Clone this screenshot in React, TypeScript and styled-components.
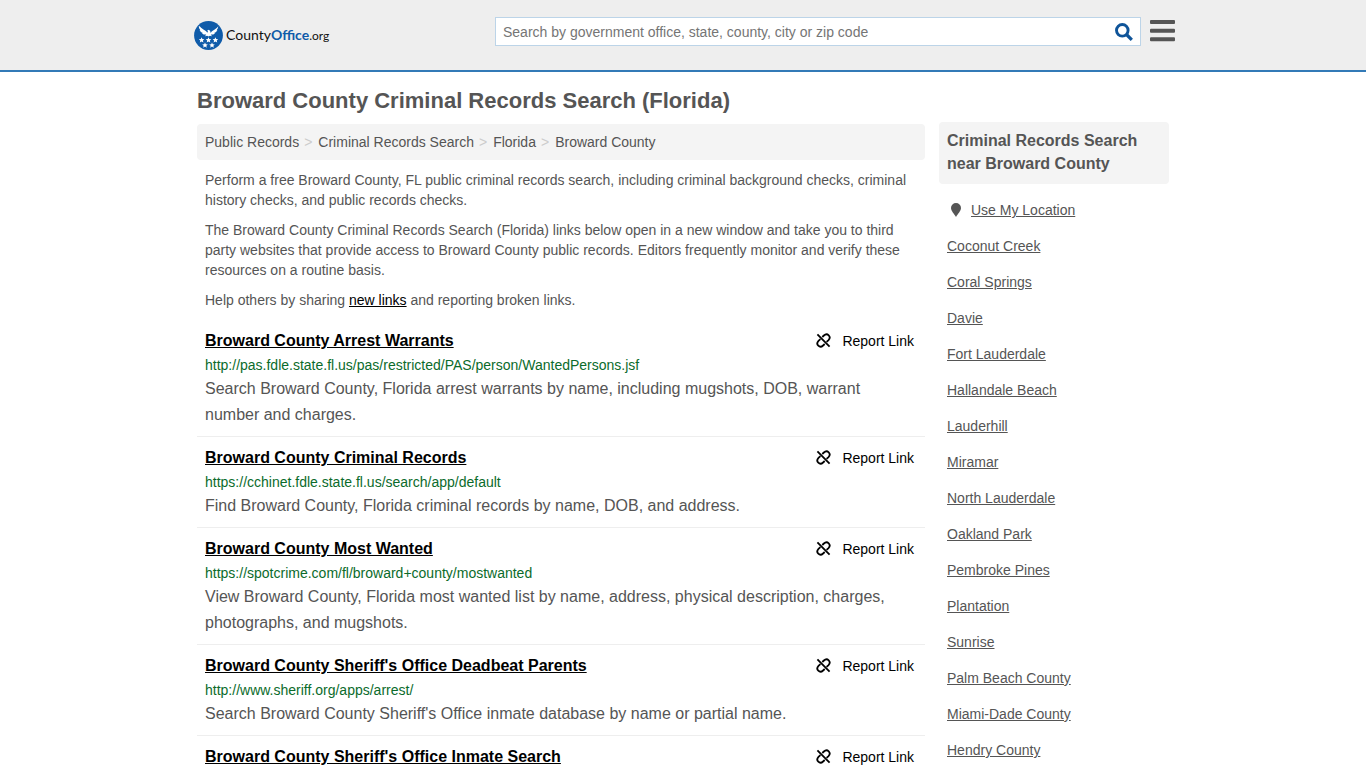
import React from 'react';
import styled, { createGlobalStyle } from 'styled-components';

const GlobalStyle = createGlobalStyle`
  *, *::before, *::after { box-sizing: border-box; }
  body {
    margin: 0;
    background: #fff;
    color: #555;
    font: 14px/20px "Liberation Sans", Arial, sans-serif;
  }
  a { color: inherit; }
`;

const Header = styled.header`
  height: 72px;
  background: #eee;
  border-bottom: 2px solid #337ab7;
`;

const HeaderInner = styled.div`
  display: flex;
  align-items: flex-start;
  max-width: 984px;
  margin: 0 auto;
  padding: 17px 0 0 3px;
`;

const Logo = styled.a`
  display: flex;
  align-items: center;
  gap: 3px;
  margin-top: 3px;
  color: #111;
  font: 14px/30px Lato, sans-serif;
  text-decoration: none;

  b { color: #0f5ba9; }
  small { font-size: 12px; }
`;

const SearchForm = styled.form`
  display: flex;
  flex: 0 1 646px;
  height: 29px;
  margin-left: auto;
  background: #fff;
  border: 1px solid #bcd4e8;
`;

const SearchInput = styled.input`
  flex: 1;
  min-width: 0;
  padding: 0 7px;
  border: 0;
  outline: 0;
  background: none;
  color: #555;
  font: 14px/20px "Liberation Sans", Arial, sans-serif;

  &::placeholder { color: #757575; }
`;

const IconButton = styled.button`
  display: flex;
  align-items: center;
  padding: 0 7px;
  border: 0;
  background: none;
  cursor: pointer;
`;

const MenuButton = styled(IconButton)`
  margin: 3px 0 0 9px;
  padding: 0;
`;

const Page = styled.div`
  display: flex;
  align-items: flex-start;
  gap: 14px;
  max-width: 972px;
  margin: 0 auto;
`;

const Main = styled.main`
  flex: 1;
  min-width: 0;
`;

const Title = styled.h1`
  margin: 0;
  padding: 15px 0 9px;
  font-size: 22px;
  line-height: 28px;
`;

const Breadcrumb = styled.nav`
  padding: 8px;
  background: #f4f4f4;
  border-radius: 4px;

  a { text-decoration: none; }
  a + a::before {
    content: ">";
    padding: 0 6px 0 5px;
    color: #ccc;
  }
`;

const Intro = styled.div`
  padding: 0 8px;

  p { margin: 10px 0; }
  a { color: #000; }
`;

const Record = styled.article`
  padding: 8px;
  border-bottom: 1px solid #eee;
`;

const RecordHead = styled.div`
  display: flex;
  justify-content: space-between;
  align-items: center;
  height: 25px;
  padding-right: 3px;
  color: #000;
`;

const RecordTitle = styled.h2`
  margin: 0;
  font-size: 16px;
  line-height: 25px;
`;

const ReportLink = styled.a`
  display: flex;
  align-items: center;
  gap: 11px;
  text-decoration: none;
`;

const RecordUrl = styled.div`
  padding: 2px 0 1px;
  color: #0b6b2b;
  line-height: 20px;
`;

const RecordText = styled.p`
  margin: 0;
  font-size: 16px;
  line-height: 26px;
`;

const Sidebar = styled.aside`
  flex: 0 0 230px;
  padding-top: 50px;
`;

const SidebarTitle = styled.h2`
  margin: 0 0 8px;
  padding: 7px 8px 9px;
  background: #f4f4f4;
  border-radius: 4px;
  font-size: 16px;
  line-height: 23px;
`;

const PlaceList = styled.ul`
  margin: 0;
  padding: 0 8px;
  list-style: none;
`;

const Place = styled.li`
  display: flex;
  align-items: center;
  gap: 10px;
  height: 36px;

  svg { margin-left: 4px; }
`;

const star = (x: number, y: number) =>
  `M${x} ${y - 2.8}l.8 1.900 2 .1-1.500 1.300.5 2-1.800-1.100-1.800 1.100.5-2-1.500-1.300 2-.1z`;

const LogoMark = () => (
  <svg width="29" height="29" viewBox="0 0 29 29" aria-hidden="true">
    <circle cx="14.5" cy="14.5" r="14.4" fill="#0f5ba9" />
    <path
      fill="#fff"
      d="M4.700 5.300c.2 1.600.8 2.900 1.700 3.900l-.8-.1c.7 1.500 1.800 2.500 3.200 3l-.8.3c1.300 1.100 2.700 1.300 4.200 1.200l-1.200 1.600 2.100-.5 1.400.9 1.400-.9 2.100.5-1.200-1.600c1.500.1 2.900-.1 4.200-1.200l-.8-.3c1.400-.5 2.500-1.500 3.200-3l-.8.1c.9-1 1.500-2.300 1.700-3.900-1.700 2.300-3.500 3.100-5.200 4.200-1.100.7-1.900 1.500-2.400 2.400l-.6-2.200-1.500-.9-1.700 1.200 1.100.1-.7 1.700c-.5-.9-1.200-1.600-2.200-2.300-1.700-1.100-3.600-1.900-5.400-4.200z"
    />
    <path
      fill="#fff"
      d={[star(7.600, 19), star(14.500, 19), star(21.400, 19), star(11, 24.200), star(18, 24.200)].join('')}
    />
  </svg>
);

const SearchIcon = () => (
  <svg width="18" height="18" viewBox="0 0 18 18" fill="none" stroke="#0f5499" aria-hidden="true">
    <circle cx="7.300" cy="7.300" r="5.800" strokeWidth="2.900" />
    <path d="M11.500 11.500l5.300 5.300" strokeWidth="3.200" />
  </svg>
);

const MenuIcon = () => (
  <svg width="25" height="22" viewBox="0 0 25 22" fill="#555" aria-hidden="true">
    <rect width="25" height="4" rx="1" />
    <rect width="25" height="4" rx="1" y="8.700" />
    <rect width="25" height="4" rx="1" y="17.300" />
  </svg>
);

const BrokenLinkIcon = () => (
  <svg width="15" height="15" viewBox="0 0 15 15" fill="none" stroke="#000" strokeWidth="1.800" aria-hidden="true">
    <path d="M1.400 1.400l12.200 12.200M6.300 4l1.600-1.500c1.500-1.400 3.600-1.400 4.800-.2s1.200 3.300-.2 4.800L10.600 8.900M8.700 11l-1.600 1.500c-1.500 1.400-3.600 1.400-4.800.2s-1.200-3.300.2-4.800L4.400 6.100" />
  </svg>
);

const PinIcon = () => (
  <svg width="10" height="14" viewBox="0 0 10 14" fill="#555" aria-hidden="true">
    <path d="M5 0a5 5 0 0 1 5 5c0 3-3.200 5.800-5 9-1.800-3.200-5-6-5-9a5 5 0 0 1 5-5z" />
  </svg>
);

const crumbs = ['Public Records', 'Criminal Records Search', 'Florida', 'Broward County'];

const records = [
  {
    title: 'Broward County Arrest Warrants',
    url: 'http://pas.fdle.state.fl.us/pas/restricted/PAS/person/WantedPersons.jsf',
    text: 'Search Broward County, Florida arrest warrants by name, including mugshots, DOB, warrant number and charges.',
  },
  {
    title: 'Broward County Criminal Records',
    url: 'https://cchinet.fdle.state.fl.us/search/app/default',
    text: 'Find Broward County, Florida criminal records by name, DOB, and address.',
  },
  {
    title: 'Broward County Most Wanted',
    url: 'https://spotcrime.com/fl/broward+county/mostwanted',
    text: 'View Broward County, Florida most wanted list by name, address, physical description, charges, photographs, and mugshots.',
  },
  {
    title: "Broward County Sheriff's Office Deadbeat Parents",
    url: 'http://www.sheriff.org/apps/arrest/',
    text: "Search Broward County Sheriff's Office inmate database by name or partial name.",
  },
  { title: "Broward County Sheriff's Office Inmate Search" },
];

const places = [
  'Coconut Creek',
  'Coral Springs',
  'Davie',
  'Fort Lauderdale',
  'Hallandale Beach',
  'Lauderhill',
  'Miramar',
  'North Lauderdale',
  'Oakland Park',
  'Pembroke Pines',
  'Plantation',
  'Sunrise',
  'Palm Beach County',
  'Miami-Dade County',
  'Hendry County',
];

export default function App() {
  return (
    <>
      <GlobalStyle />
      <Header>
        <HeaderInner>
          <Logo href="#">
            <LogoMark />
            <span>County<b>Office</b><small>.org</small></span>
          </Logo>
          <SearchForm role="search">
            <SearchInput
              type="text"
              aria-label="Search"
              placeholder="Search by government office, state, county, city or zip code"
            />
            <IconButton type="submit" aria-label="Search"><SearchIcon /></IconButton>
          </SearchForm>
          <MenuButton type="button" aria-label="Menu"><MenuIcon /></MenuButton>
        </HeaderInner>
      </Header>
      <Page>
        <Main>
          <Title>Broward County Criminal Records Search (Florida)</Title>
          <Breadcrumb aria-label="Breadcrumb">
            {crumbs.map((crumb) => <a key={crumb} href="#">{crumb}</a>)}
          </Breadcrumb>
          <Intro>
            <p>
              Perform a free Broward County, FL public criminal records search, including criminal
              background checks, criminal history checks, and public records checks.
            </p>
            <p>
              The Broward County Criminal Records Search (Florida) links below open in a new window
              and take you to third party websites that provide access to Broward County public
              records. Editors frequently monitor and verify these resources on a routine basis.
            </p>
            <p>
              Help others by sharing <a href="#">new links</a> and reporting broken links.
            </p>
          </Intro>
          {records.map(({ title, url, text }) => (
            <Record key={title}>
              <RecordHead>
                <RecordTitle><a href="#">{title}</a></RecordTitle>
                <ReportLink href="#"><BrokenLinkIcon />Report Link</ReportLink>
              </RecordHead>
              {url && <RecordUrl>{url}</RecordUrl>}
              {text && <RecordText>{text}</RecordText>}
            </Record>
          ))}
        </Main>
        <Sidebar>
          <SidebarTitle>Criminal Records Search near Broward County</SidebarTitle>
          <PlaceList>
            <Place><PinIcon /><a href="#">Use My Location</a></Place>
            {places.map((place) => <Place key={place}><a href="#">{place}</a></Place>)}
          </PlaceList>
        </Sidebar>
      </Page>
    </>
  );
}
